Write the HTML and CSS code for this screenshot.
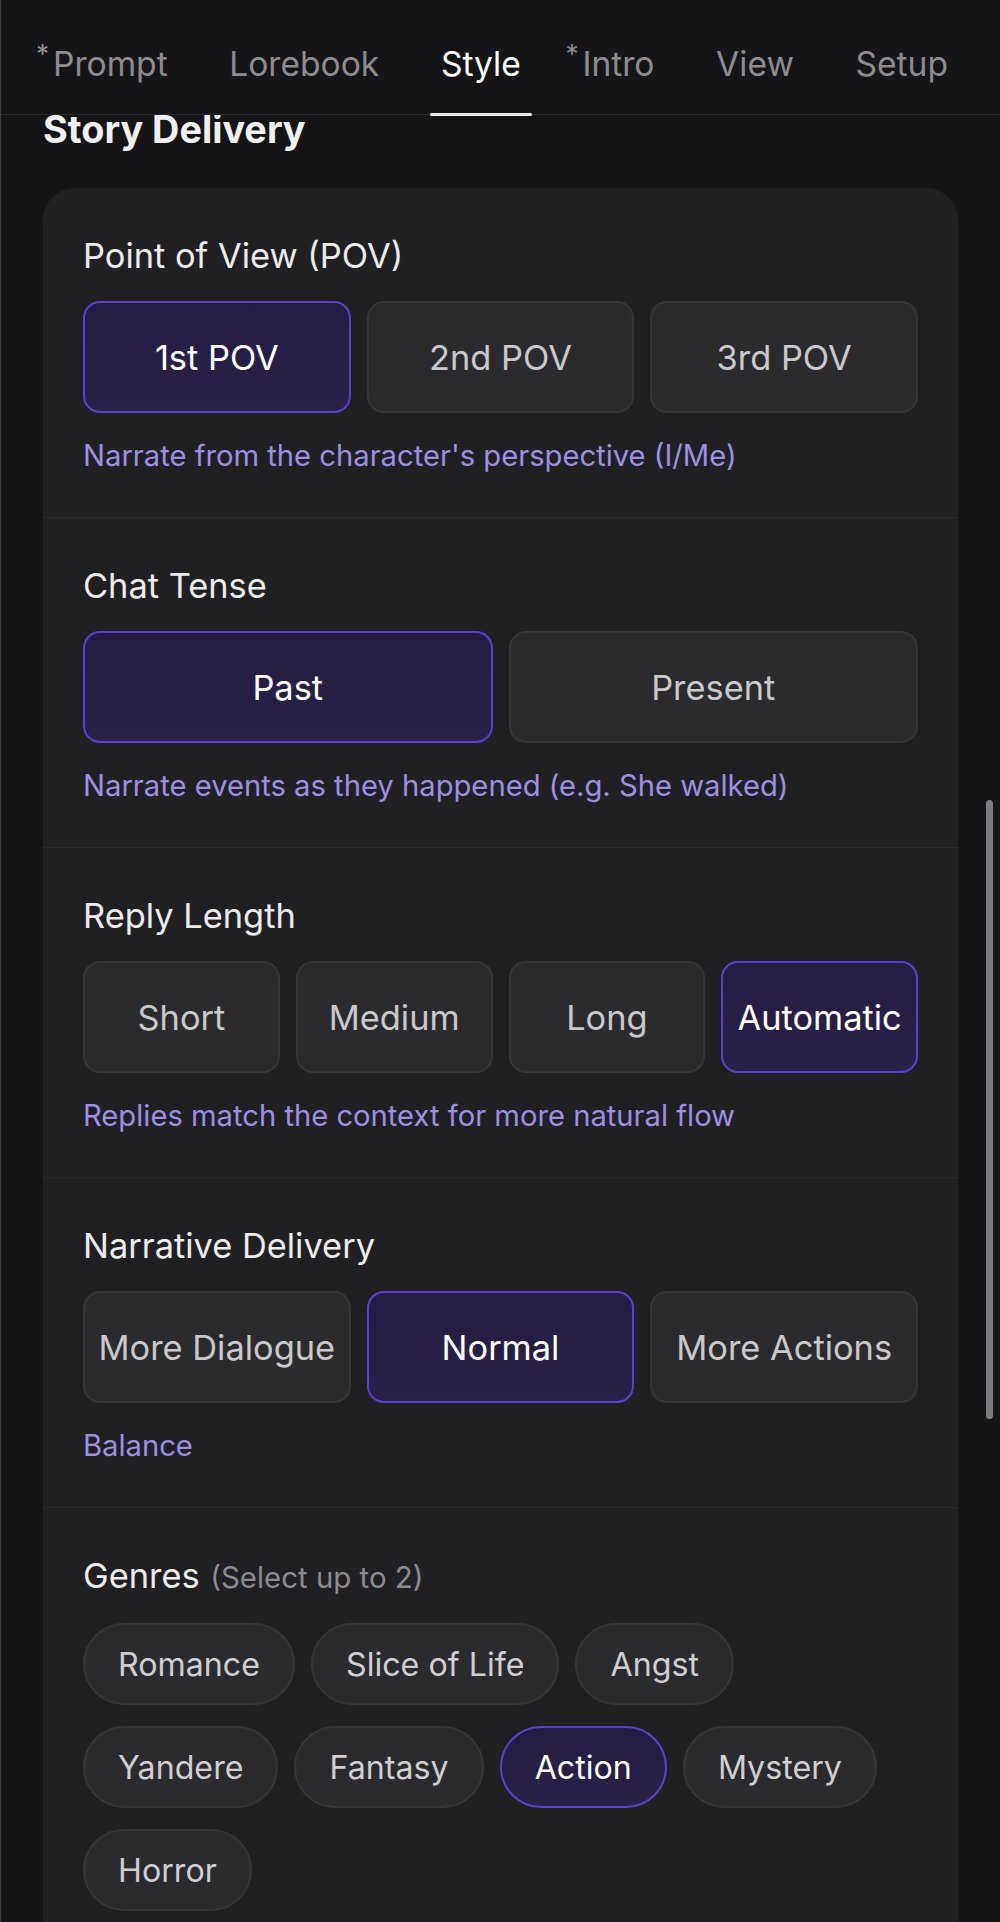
FILE: index.html
```html
<!DOCTYPE html>
<html lang="en">
<head>
<meta charset="utf-8">
<title>Style</title>
<link rel="stylesheet" href="styles.css">
</head>
<body>
<div class="screen">
  <nav class="tabs">
    <div class="tab"><span class="mark">*</span>Prompt</div>
    <div class="tab">Lorebook</div>
    <div class="tab active">Style</div>
    <div class="tab"><span class="mark">*</span>Intro</div>
    <div class="tab">View</div>
    <div class="tab">Setup</div>
  </nav>

  <main class="content">
    <h1 class="page-title">Story Delivery</h1>

    <section class="card">
      <div class="group">
        <h2 class="group-title">Point of View (POV)</h2>
        <div class="options cols-3">
          <button class="opt selected">1st POV</button>
          <button class="opt">2nd POV</button>
          <button class="opt">3rd POV</button>
        </div>
        <p class="hint">Narrate from the character's perspective (I/Me)</p>
      </div>

      <div class="group">
        <h2 class="group-title">Chat Tense</h2>
        <div class="options cols-2">
          <button class="opt selected">Past</button>
          <button class="opt">Present</button>
        </div>
        <p class="hint">Narrate events as they happened (e.g. She walked)</p>
      </div>

      <div class="group">
        <h2 class="group-title">Reply Length</h2>
        <div class="options cols-4">
          <button class="opt">Short</button>
          <button class="opt">Medium</button>
          <button class="opt">Long</button>
          <button class="opt selected">Automatic</button>
        </div>
        <p class="hint">Replies match the context for more natural flow</p>
      </div>

      <div class="group">
        <h2 class="group-title">Narrative Delivery</h2>
        <div class="options cols-3">
          <button class="opt">More Dialogue</button>
          <button class="opt selected">Normal</button>
          <button class="opt">More Actions</button>
        </div>
        <p class="hint">Balance</p>
      </div>

      <div class="group">
        <h2 class="group-title">Genres <span class="sub">(Select up to 2)</span></h2>
        <div class="chips">
          <button class="chip">Romance</button>
          <button class="chip">Slice of Life</button>
          <button class="chip">Angst</button>
          <button class="chip">Yandere</button>
          <button class="chip">Fantasy</button>
          <button class="chip selected">Action</button>
          <button class="chip">Mystery</button>
          <button class="chip">Horror</button>
        </div>
      </div>
    </section>
  </main>

  <div class="scrollbar"></div>
</div>
</body>
</html>
```

FILE: styles.css
```css
* { box-sizing: border-box; }

html, body {
  margin: 0;
  padding: 0;
  background: #151517;
}

body {
  width: 1000px;
  height: 1922px;
  overflow: hidden;
  font-family: Inter, "Noto Sans", "Liberation Sans", sans-serif;
  color: #ececec;
}

.screen {
  position: relative;
  width: 1000px;
  height: 1922px;
  overflow: hidden;
  background: #151517;
  border-left: 1px solid #3a3a3d;
}

/* ---------- tabs ---------- */
.tabs {
  position: relative;
  z-index: 2;
  display: flex;
  justify-content: space-between;
  height: 115px;
  padding: 0 41px 0 41px;
  background: #151517;
  border-bottom: 1px solid #29292c;
}

.tab {
  position: relative;
  padding: 44px 11px 0;
  font-size: 33.6px;
  line-height: 40px;
  color: #8c8c8f;
  white-space: nowrap;
}

.tab.active {
  color: #ffffff;
}

.tab.active::after {
  content: "";
  position: absolute;
  left: 0;
  right: 0;
  bottom: -2px;
  height: 3px;
  border-radius: 2px;
  background: #e9e9ea;
}

.mark {
  position: absolute;
  left: -6px;
  top: 41px;
  font-size: 26px;
  line-height: 26px;
  color: #8c8c8f;
}

/* ---------- content ---------- */
.content {
  position: relative;
  z-index: 1;
}

.page-title {
  margin: 0;
  padding-left: 42px;
  font-size: 37.8px;
  line-height: 28px;
  font-weight: 700;
  color: #f0f0f0;
}

.card {
  margin: 45px 42px 0;
  background: #202023;
  border-radius: 32px;
}

.group {
  padding: 48px 40px 44px;
  border-top: 1px solid #2a2a2d;
}

.group:first-child {
  border-top: none;
}

.group-title {
  margin: 0 0 25px;
  font-size: 34.4px;
  line-height: 40px;
  font-weight: 400;
  color: #ececec;
}

.sub {
  margin-left: 1px;
  font-size: 29.4px;
  color: #8c8c90;
}

.options {
  display: grid;
  gap: 16px;
}

.cols-2 { grid-template-columns: repeat(2, 1fr); }
.cols-3 { grid-template-columns: repeat(3, 1fr); }
.cols-4 { grid-template-columns: repeat(4, 1fr); }

.opt {
  height: 112px;
  padding: 0;
  border: 2px solid #36363a;
  border-radius: 17px;
  background: #2b2b2e;
  color: #c9c9cb;
  font-family: inherit;
  font-size: 34.4px;
  font-weight: 400;
  white-space: nowrap;
}

.opt.selected,
.chip.selected {
  border-color: #5b40d4;
  background: linear-gradient(180deg, #251c44 0%, #2a2148 100%);
  color: #ffffff;
}

.hint {
  margin: 26px 0 0;
  font-size: 29.2px;
  line-height: 34px;
  color: #9d90e4;
}

.chips {
  display: flex;
  flex-wrap: wrap;
  column-gap: 16px;
  row-gap: 21px;
}

.chip {
  height: 82px;
  padding: 0 33px;
  border: 2px solid #36363a;
  border-radius: 41px;
  background: #2b2b2e;
  color: #cfcfd1;
  font-family: inherit;
  font-size: 32.2px;
  font-weight: 400;
  white-space: nowrap;
}

/* overlay scrollbar */
.scrollbar {
  position: absolute;
  z-index: 3;
  left: 985px;
  top: 800px;
  width: 7px;
  height: 619px;
  border-radius: 4px;
  background: #7c7c80;
}
```
